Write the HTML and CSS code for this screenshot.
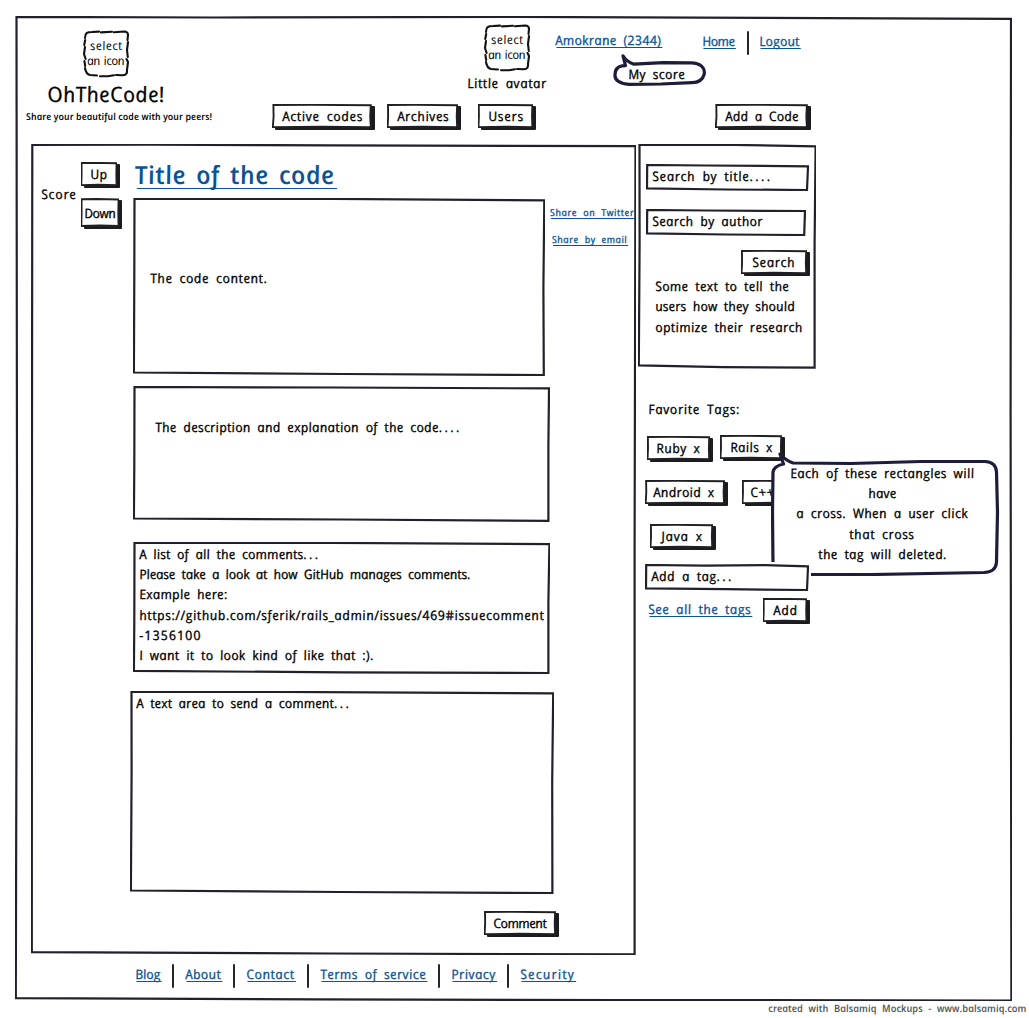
FILE: index.html
```html
<!DOCTYPE html>
<html lang="en">
<head>
<meta charset="utf-8">
<title>OhTheCode!</title>
<link rel="stylesheet" href="styles.css">
</head>
<body>
<svg class="defs" aria-hidden="true">
  <symbol id="btn" viewBox="0 0 100 23" preserveAspectRatio="none">
    <path class="face" d="M1.4 1 L40 .8 L98.8 1.2 L98.2 12 L98.8 22.2 L50 21.8 L.8 22.2 L1.6 12Z"/>
  </symbol>
  <symbol id="icon" viewBox="0 0 48 48">
    <path class="dash" d="M3 8 C3 3 5 2 10 2 L17 1.6 M19 2.4 L30 1.8 M32 2.3 L42 1.5 Q46 1.5 46 5 L45.5 10 M46 12 L45 20 L45.8 27 M44.5 29 L46 32 L45 40 Q45.5 45 41 45.3 L34 45 M32 45.2 L26 46.3 L18 46.2 M15 45.5 L8 45 Q4 44 3 38 M3.2 36 L2.4 31 M3.6 29 L2 24 L3 17 M2.2 15 L3.2 10"/>
  </symbol>
</svg>

<div class="page">
<div class="shell">
  <svg class="frame" viewBox="0 0 997 985"><path d="M1.5 .9 L200 1.5 L500 .9 L996 2.8 L995.6 400 L996.4 984.5 L600 984 L300 983.4 L.8 982.2 L2 500Z"/></svg>

  <header class="header">
    <div class="brand">
      <div class="pick"><svg><use href="#icon"/></svg><span class="t s5">select</span><span class="t n4">an icon</span></div>
      <h1><span class="t s5">OhTheCode!</span></h1>
      <p><span class="t">Share your beautiful code with your peers!</span></p>
    </div>
    <div class="top">
      <div class="account">
        <div class="avatar">
          <div class="pick"><svg><use href="#icon"/></svg><span class="t s5">select</span><span class="t n4">an icon</span></div>
          <span class="t s6">Little avatar</span>
        </div>
        <div class="user"><a class="t s3">Amokrane (2344)</a>
          <div class="score-note">
            <svg viewBox="0 0 94 32"><path class="balloon" d="M10 1.8 Q14 8 21 10.2 L50 8.6 L78 8.8 Q92 9.4 91.3 20 Q89 28.5 79 28.7 L48 30 L16 30.4 Q1.5 29 2 21 Q2 13 9 11.8 L12.5 11.6Z"/></svg>
            <span class="t s4">My score</span>
          </div>
        </div>
        <nav class="session"><a class="t n4">Home</a><i class="bar"></i><a class="t s1">Logout</a></nav>
      </div>
      <nav class="menu">
        <button class="b b-active"><svg><use href="#btn"/></svg><span class="t s7">Active codes</span></button>
        <button class="b b-arch"><svg><use href="#btn"/></svg><span class="t s6">Archives</span></button>
        <button class="b b-users"><svg><use href="#btn"/></svg><span class="t s8">Users</span></button>
        <button class="b b-addcode"><svg><use href="#btn"/></svg><span class="t s2">Add a Code</span></button>
      </nav>
    </div>
  </header>

  <div class="columns">
    <main class="main">
      <svg class="frame" viewBox="0 0 605 811"><path d="M1.3 1 L120 .7 L300 1.3 L604.5 2.2 L603.6 400 L603.6 810.4 L300 809.5 L.8 808.2 L1 300Z"/></svg>
      <aside class="vote">
        <span class="t s8">Score</span>
        <div class="arrows">
          <button class="b b-up"><svg><use href="#btn"/></svg><span class="t s5">Up</span></button>
          <button class="b b-down"><svg><use href="#btn"/></svg><span class="t n4">Down</span></button>
        </div>
      </aside>
      <article class="post">
        <h2><a class="t s5">Title of the code</a></h2>
        <div class="code-row">
          <section class="box code"><svg class="frame" viewBox="0 0 412 178"><path d="M1.5 1 L200 .9 L411.3 2.4 L410.4 90 L410.8 177 L210 176 L.9 174.5 L1.3 80Z"/></svg><span class="t s6">The code content.</span></section>
          <div class="share"><a class="t s6">Share on Twitter</a><a class="t s5">Share by email</a></div>
        </div>
        <section class="box desc"><svg class="frame" viewBox="0 0 417 136"><path d="M1.5 1 L200 1.5 L416 2.4 L415.4 60 L415.4 134.8 L210 133.5 L.9 132.5 L1.3 80Z"/></svg><span class="t s3">The description and explanation of the code<span class="dots">....</span></span></section>
        <section class="box comments"><svg class="frame" viewBox="0 0 417 132"><path d="M1.5 1 L200 .9 L416.4 2.2 L415.4 60 L415.4 131 L210 130.4 L.9 128.8 L1.3 80Z"/></svg>
          <span class="t s2">A list of all the comments<span class="dots">...</span></span>
          <span class="t n1">Please take a look at how GitHub manages comments.</span>
          <span class="t s3">Example here:</span>
          <span class="t s6">https://github.com/sferik/rails_admin/issues/469#issuecomment</span>
          <span class="t s10">-1356100</span>
          <span class="t s3">I want it to look kind of like that :).</span>
        </section>
        <section class="box reply"><svg class="frame" viewBox="0 0 424 203"><path d="M1.5 1 L150 .9 L423.2 2.4 L422.2 90 L422.4 202 L210 201 L.9 199.5 L1.6 80Z"/></svg><span class="t s1">A text area to send a comment<span class="dots">...</span></span></section>
        <button class="b b-comment"><svg><use href="#btn"/></svg><span class="t n4">Comment</span></button>
      </article>
    </main>

    <aside class="side">
      <section class="search">
        <svg class="frame" viewBox="0 0 178 225"><path d="M1.5 1 L80 .6 L177.6 2.3 L176.6 100 L176.6 223.6 L85 223.2 L.8 221.4 L1.6 100Z"/></svg>
        <div class="field f-title"><svg class="frame" viewBox="0 0 163 27"><path d="M1.2 1 L60 1.5 L162 2.3 L161 26 L80 25.5 L1 24.3Z"/></svg><span class="t s7">Search by title<span class="dots">....</span></span></div>
        <div class="field f-author"><svg class="frame" viewBox="0 0 160 27"><path d="M1.2 1 L60 1.5 L159 2 L158.2 26 L80 25.5 L1 24.3Z"/></svg><span class="t s4">Search by author</span></div>
        <button class="b b-search"><svg><use href="#btn"/></svg><span class="t s7">Search</span></button>
        <div class="hint"><span class="t s4">Some text to tell the</span><span class="t s1">users how they should</span><span class="t s4">optimize their research</span></div>
      </section>
      <section class="tags">
        <h3><span class="t s7">Favorite Tags:</span></h3>
        <div class="tag-row r1"><button class="b b-ruby"><svg><use href="#btn"/></svg><span class="t s5">Ruby x</span></button><button class="b b-rails"><svg><use href="#btn"/></svg><span class="t s4">Rails x</span></button></div>
        <div class="tag-row r2"><button class="b b-android"><svg><use href="#btn"/></svg><span class="t s3">Android x</span></button><button class="b b-cpp"><svg><use href="#btn"/></svg><span class="t s6">C++ x</span></button></div>
        <div class="tag-row r3"><button class="b b-java"><svg><use href="#btn"/></svg><span class="t s8">Java x</span></button></div>
        <div class="field f-tag"><svg class="frame" viewBox="0 0 164 27"><path d="M1.2 1 L60 1.6 L120 1.2 L163 2.3 L162 26 L80 25.2 L1 24.3Z"/></svg><span class="t s5">Add a tag<span class="dots">...</span></span></div>
        <div class="tag-foot"><a class="t s5">See all the tags</a><button class="b b-add"><svg><use href="#btn"/></svg><span class="t s7">Add</span></button></div>
        <div class="tag-note">
          <svg viewBox="0 0 230 124"><path class="balloon" d="M9 2 Q14 8 22 11 L80 11.5 L150 9.5 L214 9.5 Q225 10 225.5 20 L226.5 60 L225.5 110 Q225 120 213 120.5 L100 122.5 L12 122.5 Q2 123 2 112 L1.5 60 L2 20 Q3 14 12.5 12Z"/></svg>
          <span class="t s4">Each of these rectangles will</span>
          <span class="t s2">have</span>
          <span class="t s4">a cross. When a user click</span>
          <span class="t s6">that cross</span>
          <span class="t s4">the tag will deleted.</span>
        </div>
      </section>
    </aside>
  </div>

  <footer class="footer">
    <a class="t">Blog</a><i class="bar"></i><a class="t s4">About</a><i class="bar"></i><a class="t s6">Contact</a><i class="bar"></i><a class="t s5">Terms of service</a><i class="bar"></i><a class="t s5">Privacy</a><i class="bar"></i><a class="t s12">Security</a>
  </footer>
</div>
<p class="credit"><span class="t">created with Balsamiq Mockups - www.balsamiq.com</span></p>
</div>
</body>
</html>
```
FILE: styles.css
```css
* { box-sizing: border-box; margin: 0; padding: 0; }
body {
  width: 1029px; height: 1018px; overflow: hidden; background: #fff; color: #000;
  font: italic 500 13px/20px "Open Sans", "Noto Sans", sans-serif;
}
svg { display: block; fill: none; }
.defs { position: absolute; width: 0; height: 0; }
/* upright letters with single-storey "a", close to handwriting */
.t { display: block; width: max-content; white-space: pre; word-spacing: 3px; transform: skewX(11deg); flex: none; -webkit-text-stroke: .3px currentColor; }
.dots { letter-spacing: 2.5px; }
/* letter-spacing steps, in tenths of a pixel */
.n4 { letter-spacing: -.4px; }
.n1 { letter-spacing: -.08px; }
.s1 { letter-spacing: .15px; }
.s2 { letter-spacing: .2px; }
.s3 { letter-spacing: .32px; }
.s4 { letter-spacing: .4px; }
.s5 { letter-spacing: .5px; }
.s6 { letter-spacing: .6px; }
.s7 { letter-spacing: .7px; }
.s8 { letter-spacing: .8px; }
.s10 { letter-spacing: 1px; }
.s12 { letter-spacing: 1.2px; }
a { color: #0b5394; text-decoration: underline 1px; text-underline-offset: 2px; text-decoration-skip-ink: none; }
.frame { position: absolute; inset: 0; width: 100%; height: 100%; stroke: #20212b; stroke-width: 2.2; stroke-linejoin: miter; }
.face { fill: #fff; stroke: #202024; stroke-width: 1.9; vector-effect: non-scaling-stroke; }
.dash { stroke: #111; stroke-width: 2.1; stroke-linecap: round; }
.balloon { fill: #fff; stroke: #1d1d3b; stroke-width: 3.2; stroke-linejoin: round; }
.bar { width: 2px; height: 24px; background: #25252c; flex: none; border-radius: 1px; }

.page { padding: 16px 0 0 15px; height: 1018px; }
.shell { position: relative; width: 997px; height: 985px; }

.b { position: relative; height: 26px; border: 0; background: none; font: inherit; color: inherit; flex: none;
  display: flex; align-items: center; justify-content: center; padding: 0 3px 2px 0; }
.b::before { content: ""; position: absolute; inset: 2px 0 0 3px; background: #1c1c20; border-radius: 1px; }
.b svg { position: absolute; left: 0; top: 0; width: calc(100% - 3px); height: calc(100% - 2px); }

.header { display: flex; height: 128px; }
.brand { width: 188px; margin-left: 11px; padding-top: 14px; }
.pick { position: relative; width: 48px; height: 48px; padding-top: 9px; display: flex; flex-direction: column; align-items: center;
  font-size: 12px; line-height: 14.5px; font-weight: 400; }
.pick .t { -webkit-text-stroke-width: 0; }
.pick .n4 { word-spacing: 1px; }
.pick svg { position: absolute; inset: 0; width: 100%; height: 100%; }
.brand .pick { margin-left: 56px; }
.brand h1 { font-size: 21px; font-weight: 500; line-height: 30px; padding: 1px 0 0 21px; }
.brand p { font-size: 9.5px; line-height: 14px; font-weight: 600; padding-top: 1px; }
.brand p .t { word-spacing: 0; -webkit-text-stroke-width: 0; letter-spacing: .05px; }
.top { margin-left: 58px; width: 540px; }
.account { display: flex; height: 88px; padding-left: 195px; }
.avatar { width: 80px; padding-top: 8px; }
.avatar .pick { margin: 0 0 1px 16px; }
.user { position: relative; width: 106px; margin-left: 8px; padding-top: 14px; }
.score-note { position: absolute; left: 58px; top: 38px; width: 94px; height: 32px; padding: 10px 0 0 15px; }
.score-note svg { position: absolute; inset: 0; }
.session { display: flex; align-items: flex-start; margin-left: 41px; padding-top: 15px; }
.session .bar { margin: 0 10px 0 12px; }
.session a:first-child { width: 33px; }
.menu { display: flex; }
.b-active { width: 103px; }
.b-arch { width: 74px; margin-left: 12px; }
.b-users { width: 58px; margin-left: 17px; }
.b-addcode { width: 96px; margin-left: 179px; }

.columns { display: flex; gap: 2px; padding-left: 16px; height: 811px; }
.main { position: relative; width: 605px; display: flex; align-items: flex-start; padding: 18px 0 0 10px; flex: none; }
.vote { display: flex; align-items: flex-start; width: 92px; }
.vote > .t { width: 40px; margin-top: 22px; }
.b-down { margin-top: 10px; height: 31px; width: 41px; }
.b-up { width: 39px; }
.post { width: 502px; }
.post h2 { font-size: 25px; font-weight: 600; line-height: 24px; height: 36px; padding-left: 1px; }
.post h2 a { text-decoration-thickness: 1px; text-underline-offset: 4px; -webkit-text-stroke-width: 0; }
.code-row { display: flex; gap: 5px; }
.box { position: relative; }
.code { width: 412px; height: 178px; padding: 70px 0 0 17px; flex: none; }
.share { padding-top: 5px; font-size: 9.5px; display: flex; flex-direction: column; gap: 7px; }
.share a + a { margin-left: 2px; }
.desc { width: 417px; height: 136px; margin-top: 10px; padding: 31px 0 0 22px; }
.comments { width: 417px; height: 132px; margin-top: 20px; padding: 2px 0 0 6px; line-height: 20.2px; }
.reply { width: 424px; height: 203px; margin: 17px 0 0 -3.5px; padding: 2px 0 0 6px; }
.b-comment { width: 75px; margin: 17px 0 0 351px; }

.side { width: 178px; flex: none; }
.search { position: relative; height: 225px; padding: 20px 0 0 8px; }
.field { position: relative; height: 27px; padding: 2px 0 0 6px; background: #fff; }
.f-title { width: 163px; }
.f-author { width: 160px; margin-top: 18px; }
.b-search { width: 69px; margin: 14px 0 0 95px; }
.hint { padding-left: 9px; line-height: 20.4px; }
.tags { position: relative; padding: 30px 0 0 7px; }
.tags h3 { font-size: inherit; font-weight: inherit; padding-left: 3px; }
.tag-row { display: flex; }
.r1 { margin-top: 17px; }
.b-ruby { width: 66px; margin-left: 2px; }
.b-rails { width: 65px; margin: -1px 0 0 7px; }
.r2 { margin-top: 18px; }
.b-android { width: 83px; }
.b-android .t, .b-cpp .t { position: relative; left: -1px; }
.b-cpp { width: 63px; margin-left: 14px; }
.b-cpp .t { left: -3px; }
.r3 { margin: 18px 0 0 5px; }
.b-java { width: 66px; }
.f-tag { width: 164px; margin-top: 14px; z-index: 2; box-shadow: 0 0 0 2px #fff; }
.tag-foot { display: flex; align-items: flex-start; padding: 7px 0 0 3px; }
.tag-foot a { width: 115px; margin-top: 1px; }
.b-add { width: 47px; }
.tag-note { position: absolute; left: 133px; top: 83px; width: 230px; height: 124px; padding-top: 11px; line-height: 20.2px;
  display: flex; flex-direction: column; align-items: center; z-index: 1; }
.tag-note svg { position: absolute; inset: 0; }
.tag-note .t { position: relative; left: -4px; }

.footer { display: flex; align-items: flex-start; padding: 9px 0 0 120px; }
.footer .bar { margin: 0 11px 0 12px; }
.credit { color: #555; font-size: 10px; line-height: 14px; padding-left: 753px; font-weight: 600; }
.credit .t { -webkit-text-stroke-width: 0; }
```
